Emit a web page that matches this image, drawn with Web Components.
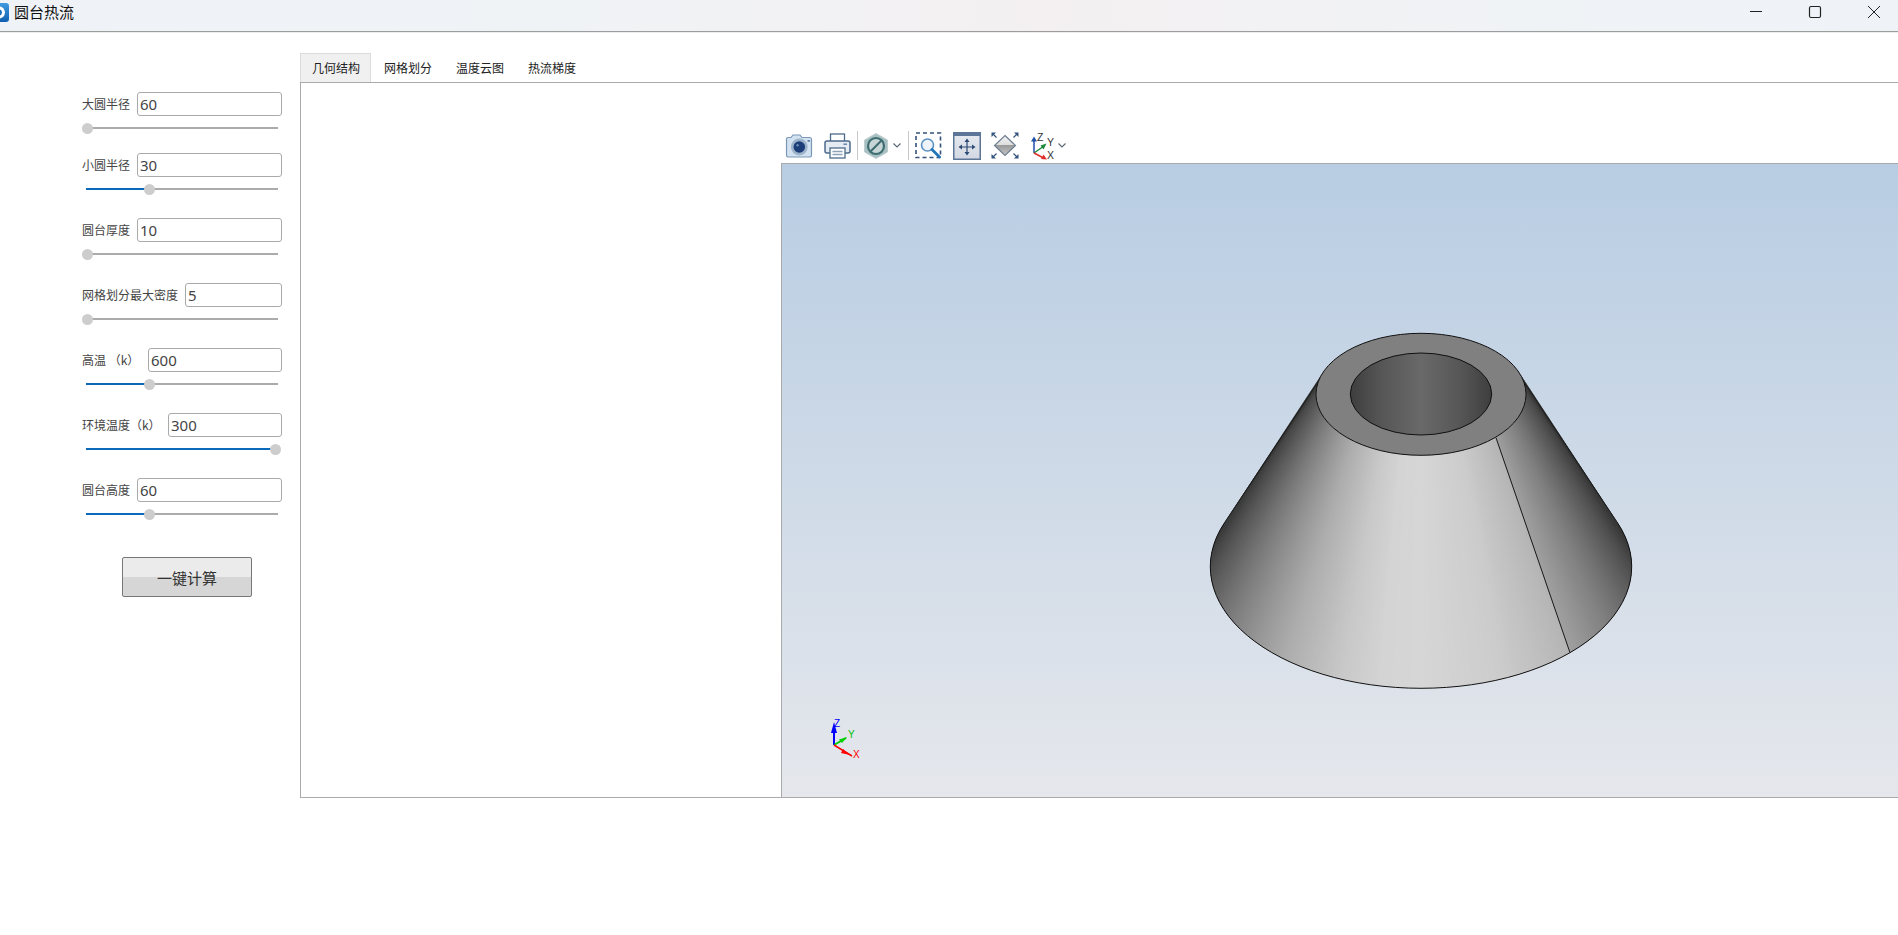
<!DOCTYPE html>
<html lang="zh-CN">
<head>
<meta charset="utf-8">
<title>圆台热流</title>
<style>
  html, body { margin: 0; height: 100%; overflow: hidden; background: #fff; }
  body { font-family: "Noto Sans CJK SC", "Noto Sans", sans-serif; }
  param-row.first { margin-bottom: -4px; }
</style>
</head>
<body>
<app-shell>
  <title-bar slot="top" caption="圆台热流"></title-bar>
  <side-panel slot="side">
    <param-row class="first" value="60" percent="0" label-width="48">大圆半径</param-row>
    <param-row value="30" percent="33" label-width="48">小圆半径</param-row>
    <param-row value="10" percent="0" label-width="48">圆台厚度</param-row>
    <param-row value="5" percent="0" label-width="96">网格划分最大密度</param-row>
    <param-row value="600" percent="33" label-width="59">高温 （k）</param-row>
    <param-row value="300" percent="100" label-width="79">环境温度（k）</param-row>
    <param-row value="60" percent="33" label-width="48">圆台高度</param-row>
    <calc-button>一键计算</calc-button>
  </side-panel>
  <tab-panel slot="main" tabs="几何结构,网格划分,温度云图,热流梯度">
    <cad-toolbar></cad-toolbar>
    <cad-viewport></cad-viewport>
  </tab-panel>
</app-shell>

<script>
/**
 * Page frame: title bar on top, parameters on the left, tabs on the right
 */
class AppShell extends HTMLElement {
  constructor() {
    super();
    this.attachShadow({ mode: 'open' });
    this.shadowRoot.innerHTML = `
      <style>
        :host { display: flex; flex-direction: column; height: 935px; overflow: hidden; }
        .body { display: flex; flex: 1; min-height: 0; }
      </style>
      <slot name="top"></slot>
      <div class="body">
        <slot name="side"></slot>
        <slot name="main"></slot>
      </div>
    `;
  }
}

class TitleBar extends HTMLElement {
  constructor() {
    super();
    this.attachShadow({ mode: 'open' });
  }

  connectedCallback() {
    this.shadowRoot.innerHTML = `
      <style>
        :host {
          display: flex;
          align-items: flex-start;
          flex: none;
          height: 31px;
          background: linear-gradient(90deg, #eff3f7 0%, #f0f3f6 30%, #f4f0f1 55%, #f0f3f6 80%, #eff3f7 100%);
          border-bottom: 1px solid #9c9c9c;
          box-shadow: 0 1px 0 #eeeeee;
        }
        .logo { width: 19px; height: 19px; margin: 3px 5px 0 -10px; flex: none; }
        .caption { font: 15px/24px "Noto Sans CJK SC", sans-serif; color: #111; flex: 1; }
        svg.win { display: block; flex: none; margin-top: 5px; }
      </style>
      <svg class="logo" viewBox="0 0 19 19">
        <defs><linearGradient id="lg" x1="0" y1="0" x2="0" y2="1">
          <stop offset="0" stop-color="#3f9be0"/><stop offset="1" stop-color="#0f5fb0"/>
        </linearGradient></defs>
        <rect width="19" height="19" rx="3" fill="url(#lg)"/>
        <circle cx="9" cy="9.5" r="6" fill="#fff"/>
        <circle cx="9" cy="9.5" r="3" fill="#1a70c0"/>
      </svg>
      <div class="caption">${this.getAttribute('caption')}</div>
      <svg class="win" width="14" height="14" viewBox="0 0 14 14" style="margin-right:45px">
        <path d="M1 6.5H13" stroke="#222" stroke-width="1" fill="none"/>
      </svg>
      <svg class="win" width="14" height="14" viewBox="0 0 14 14" style="margin-right:45px">
        <rect x="1.5" y="1.5" width="11" height="11" rx="1.5" stroke="#222" stroke-width="1.2" fill="none"/>
      </svg>
      <svg class="win" width="14" height="14" viewBox="0 0 14 14" style="margin-right:17px">
        <path d="M1 1L13 13M13 1L1 13" stroke="#222" stroke-width="1" fill="none"/>
      </svg>
    `;
  }
}

class SidePanel extends HTMLElement {
  constructor() {
    super();
    this.attachShadow({ mode: 'open' });
    this.shadowRoot.innerHTML = `
      <style>
        :host {
          display: flex;
          flex-direction: column;
          gap: 28px;
          flex: none;
          box-sizing: border-box;
          width: 300px;
          padding: 60px 18px 0 82px;
        }
      </style>
      <slot></slot>
    `;
  }
}

class ParamRow extends HTMLElement {
  constructor() {
    super();
    this.attachShadow({ mode: 'open' });
  }

  get percent() {
    return parseFloat(this.getAttribute('percent')) || 0;
  }

  connectedCallback() {
    this.shadowRoot.innerHTML = `
      <style>
        :host { display: block; width: 200px; }
        .line { display: flex; align-items: center; gap: 7px; height: 24px; }
        .label {
          flex: none;
          width: ${this.getAttribute('label-width')}px;
          white-space: nowrap;
          font: 12px/24px "Noto Sans CJK SC", sans-serif;
          color: #444;
        }
        .field {
          flex: 1;
          box-sizing: border-box;
          height: 24px;
          padding-left: 2px;
          border: 1px solid #aaa;
          border-radius: 3px;
          background: #fff;
          font: 15px/22px "Noto Sans", sans-serif;
          color: #444;
        }
        .track { position: relative; height: 2px; margin: 11px 4px 0; background: #ababab; }
        .fill { height: 2px; background: #0b69bb; width: ${this.percent}%; }
        .thumb {
          position: absolute;
          top: -4.5px;
          left: calc(1px + (100% - 4px) * ${this.percent / 100});
          width: 11px;
          height: 11px;
          margin-left: -5px;
          border-radius: 50%;
          background: #cdcdcd;
        }
      </style>
      <div class="line">
        <div class="label"><slot></slot></div>
        <div class="field">${this.getAttribute('value')}</div>
      </div>
      <div class="track"><div class="fill"></div><div class="thumb"></div></div>
    `;
  }
}

class CalcButton extends HTMLElement {
  constructor() {
    super();
    this.attachShadow({ mode: 'open' });
    this.shadowRoot.innerHTML = `
      <style>
        :host {
          display: flex;
          align-items: center;
          justify-content: center;
          box-sizing: border-box;
          width: 130px;
          height: 40px;
          margin: 14px 0 0 40px;
          border: 1px solid #777;
          border-radius: 2px;
          background: linear-gradient(180deg, #ebebeb 0, #ebebeb 50%, #d6d6d6 50%, #d6d6d6 100%);
          font: 15px "Noto Sans CJK SC", sans-serif;
          color: #333;
        }
      </style>
      <slot></slot>
    `;
  }
}

class TabPanel extends HTMLElement {
  constructor() {
    super();
    this.attachShadow({ mode: 'open' });
  }

  connectedCallback() {
    const tabs = this.getAttribute('tabs').split(',');
    this.shadowRoot.innerHTML = `
      <style>
        :host {
          display: flex;
          flex-direction: column;
          flex: 1;
          min-width: 0;
          height: 745px;
          margin-top: 21px;
        }
        .tabs { display: flex; flex: none; height: 29px; }
        .tab {
          box-sizing: border-box;
          width: 72px;
          padding-left: 12px;
          font: 12px/29px "Noto Sans CJK SC", sans-serif;
          color: #222;
        }
        .tab.active {
          width: 71px;
          margin-right: 1px;
          padding-left: 11px;
          line-height: 27px;
          background: #f0f0f0;
          border: 1px solid #dcdcdc;
          border-bottom: 0;
        }
        .pane {
          flex: 1;
          display: flex;
          min-height: 0;
          border: 1px solid #aaa;
          border-right: 0;
          background: #fff;
        }
        .blank { flex: none; width: 480px; }
        .content { flex: 1; min-width: 0; display: flex; flex-direction: column; padding-top: 48px; }
      </style>
      <div class="tabs">
        ${tabs.map((t, i) => `<div class="tab ${i === 0 ? 'active' : ''}">${t}</div>`).join('')}
      </div>
      <div class="pane">
        <div class="blank"></div>
        <div class="content"><slot></slot></div>
      </div>
    `;
  }
}

// toolbar icons, drawn on their own little grids
const CHEVRON = `<svg width="8" height="5" viewBox="0 0 8 5"><path d="M.5 .5L4 4L7.5 .5" fill="none" stroke="#5d6b78" stroke-width="1.2"/></svg>`;

class CadToolbar extends HTMLElement {
  constructor() {
    super();
    this.attachShadow({ mode: 'open' });
    this.shadowRoot.innerHTML = `
      <style>
        :host {
          display: flex;
          align-items: center;
          flex: none;
          height: 32px;
          box-sizing: border-box;
          padding: 0 0 3px 4px;
        }
        svg { display: block; flex: none; }
        .sep { flex: none; width: 1px; height: 29px; background: #c9c9c9; }
      </style>
      <svg width="28" height="24" viewBox="0 0 28 24" style="margin-right:11px">
        <path d="M1.5 5.5 Q1.5 3.5 3 3.5 H6 L8 1 H15 L17 3.5 H25 Q26.5 3.5 26.5 5.5 V21 Q26.5 23 25 23 H3 Q1.5 23 1.5 21 Z" fill="#d3e2f0" stroke="#7b97b8" stroke-width="1.2"/>
        <circle cx="14.3" cy="13" r="8.4" fill="#9db3ca"/>
        <circle cx="14.3" cy="13" r="5.8" fill="#1c3d78"/>
        <circle cx="12.6" cy="11.2" r="1.2" fill="#6a8dbb"/>
        <rect x="22.5" y="6" width="2.4" height="1.8" fill="#5d7ea6"/>
      </svg>
      <svg width="27" height="26" viewBox="0 0 27 26" style="margin-right:6px">
        <rect x="6.5" y="1" width="14" height="8" fill="#fff" stroke="#4c6b8c" stroke-width="1.3"/>
        <rect x="1" y="8" width="25" height="12" rx="2" fill="#e4ebf2" stroke="#4c6b8c" stroke-width="1.5"/>
        <rect x="19.5" y="10.5" width="3.5" height="1.4" fill="#5d7ea6"/>
        <rect x="6" y="15" width="15" height="10" fill="#fff" stroke="#4c6b8c" stroke-width="1.3"/>
        <path d="M8.5 18.5H18.5M8.5 21.5H18.5" stroke="#8ba2b9" stroke-width="1.4"/>
      </svg>
      <div class="sep" style="margin-right:6px"></div>
      <svg width="24" height="26" viewBox="0 0 24 26" style="margin-right:5px">
        <path d="M12 .5L23.5 7V19L12 25.5L.5 19V7Z" fill="#a9c0c2" stroke="#bccecf"/>
        <circle cx="12" cy="13" r="8" fill="#c8d5d6" stroke="#3f6e72" stroke-width="2.2"/>
        <path d="M6.5 18.5L17.5 7.5" stroke="#3f6e72" stroke-width="2.2"/>
      </svg>
      ${CHEVRON}
      <div class="sep" style="margin:0 6px 0 7px"></div>
      <svg width="27" height="27" viewBox="0 0 27 27" style="margin-right:11px">
        <rect x="1" y="1" width="24.5" height="24.5" fill="none" stroke="#34527c" stroke-width="1.6" stroke-dasharray="4 3"/>
        <circle cx="12.5" cy="13" r="6" fill="#eef4f9" stroke="#5c93c4" stroke-width="1.6"/>
        <path d="M17 17.5L24.5 25" stroke="#1f74ba" stroke-width="2.8" stroke-linecap="round"/>
      </svg>
      <svg width="28" height="28" viewBox="0 0 28 28" style="margin-right:10px">
        <defs><linearGradient id="fit" x1="0" y1="0" x2="0" y2="1">
          <stop offset="0" stop-color="#e6e9f0"/><stop offset="1" stop-color="#d2d8e2"/>
        </linearGradient></defs>
        <rect x=".75" y=".75" width="26.5" height="26.5" fill="url(#fit)" stroke="#5d7596" stroke-width="1.5"/>
        <rect x="1" y="1" width="26" height="3" fill="#5d7596"/>
        <path d="M14 8V22M7 15H21" stroke="#2c4a74" stroke-width="1.2"/>
        <path d="M14 6.5L11.5 10H16.5ZM14 23.5L11.5 20H16.5ZM5.5 15L9 12.5V17.5ZM22.5 15L19 12.5V17.5Z" fill="#2c4a74"/>
      </svg>
      <svg width="28" height="27" viewBox="0 0 28 27" style="margin-right:11px">
        <defs><linearGradient id="dia" x1="0" y1="0" x2="0" y2="1">
          <stop offset="0" stop-color="#f2f2f2"/><stop offset=".5" stop-color="#dcdcdc"/>
          <stop offset=".5" stop-color="#9a9a9a"/><stop offset="1" stop-color="#c8c8c8"/>
        </linearGradient></defs>
        <path d="M14 3.5L24.5 13.5L14 23.5L3.5 13.5Z" fill="url(#dia)" stroke="#6e7f92" stroke-width="1.2"/>
        <path d="M.5 .5H5L.5 5ZM27.5 .5H23L27.5 5ZM.5 26.5H5L.5 22ZM27.5 26.5H23L27.5 22Z" fill="#33557f"/>
        <path d="M2 2L5.5 5.5M26 2L22.5 5.5M2 25L5.5 21.5M26 25L22.5 21.5" stroke="#33557f" stroke-width="1.2"/>
      </svg>
      <svg width="26" height="28" viewBox="0 0 26 28" style="margin-right:2px">
        <path d="M4 21V7" stroke="#1f4fa8" stroke-width="1.5"/>
        <path d="M4 4.5L1 9.5H7Z" fill="#1f4fa8"/>
        <path d="M4 21L14 14" stroke="#1c8a3c" stroke-width="1.5"/>
        <path d="M16.5 11.5L10.5 13.5L13.5 17.5Z" fill="#1c8a3c"/>
        <path d="M4 21L14.5 26.5" stroke="#e0302c" stroke-width="1.5"/>
        <path d="M17 27.5L13.5 22.5L11 27Z" fill="#e0302c"/>
        <text x="7" y="9" font-family="Liberation Sans, sans-serif" font-size="10.5" fill="#333">Z</text>
        <text x="17" y="14" font-family="Liberation Sans, sans-serif" font-size="10.5" fill="#333">Y</text>
        <text x="17" y="27" font-family="Liberation Sans, sans-serif" font-size="10.5" fill="#333">X</text>
      </svg>
      ${CHEVRON}
    `;
  }
}

/**
 * 3D view: the truncated cone is shaded facet by facet, the way the kernel view draws it
 */
class CadViewport extends HTMLElement {
  constructor() {
    super();
    this.attachShadow({ mode: 'open' });
  }

  connectedCallback() {
    this.render();
  }

  // grey level for an angle around the cone, t = 0 front, +1 left edge, -1 right edge
  // the seam at 45deg (t = -0.405) has a jump in brightness
  shade(t) {
    const left = [[0, 214], [0.1, 212], [0.2, 200], [0.355, 174], [0.5, 142], [0.69, 100], [1, 40]];
    const right = [[0, 214], [0.2, 204], [0.405, 180]];
    const past = [[0.405, 160], [0.7, 96], [1, 36]];
    const a = Math.abs(t);
    const table = t >= 0 ? left : (a <= 0.405 ? right : past);
    for (let i = 1; i < table.length; i++) {
      if (a <= table[i][0]) {
        const k = (a - table[i - 1][0]) / (table[i][0] - table[i - 1][0]);
        return Math.round(table[i - 1][1] + k * (table[i][1] - table[i - 1][1]));
      }
    }
    return table[table.length - 1][1];
  }

  renderFacets() {
    const cx = 1421;
    const top = { rx: 105, ry: 61, cy: 394.3 };
    const base = { rx: 210.7, ry: 121.6, cy: 566.7 };
    const rad = Math.PI / 180;
    let out = '';
    // each facet runs over the next one, the next paints on top, so no gaps show
    for (let d = -21; d < 201; d++) {
      const a = d * rad;
      const b = Math.min(d + 2, 201) * rad;
      const g = this.shade((d + 0.5 - 90) / 111);
      const pts = [
        [cx + top.rx * Math.cos(a), top.cy + top.ry * Math.sin(a)],
        [cx + base.rx * Math.cos(a), base.cy + base.ry * Math.sin(a)],
        [cx + base.rx * Math.cos(b), base.cy + base.ry * Math.sin(b)],
        [cx + top.rx * Math.cos(b), top.cy + top.ry * Math.sin(b)]
      ].map(p => p[0].toFixed(1) + ',' + p[1].toFixed(1)).join(' ');
      out += `<polygon points="${pts}" fill="rgb(${g},${g},${g})"/>`;
    }
    return out;
  }

  render() {
    this.shadowRoot.innerHTML = `
      <style>
        :host {
          display: block;
          flex: 1;
          min-height: 0;
          overflow: hidden;
          border-top: 1px solid #aaa;
          border-left: 1px solid #aaa;
          background: linear-gradient(180deg, #b8cde3 0%, #e5e7ec 100%);
        }
        svg { display: block; }
        text { font-family: "Liberation Sans", sans-serif; font-size: 10px; }
      </style>
      <svg width="1116" height="633" viewBox="782 164 1116 633">
        <defs>
          <linearGradient id="hole" x1="0" y1="0" x2="1" y2="0">
            <stop offset="0" stop-color="#3e3e3e"/>
            <stop offset=".22" stop-color="#565656"/>
            <stop offset=".5" stop-color="#696969"/>
            <stop offset=".78" stop-color="#565656"/>
            <stop offset="1" stop-color="#3e3e3e"/>
          </linearGradient>
        </defs>
        <polygon points="1318,382 1224.3,523.1 1330,372" fill="#333"/>
        <polygon points="1524,382 1617.7,523.1 1512,372" fill="#333"/>
        ${this.renderFacets()}
        <path d="M1318 382L1224.3 523.1M1524 382L1617.7 523.1" stroke="#1c1c1c" stroke-width="1" fill="none"/>
        <path d="M1224.3 523.1 A210.7 121.6 0 1 0 1617.7 523.1" stroke="#111" stroke-width="1" fill="none"/>
        <path d="M1496 437.7L1570 652.7" stroke="#1a1a1a" stroke-width="1"/>
        <ellipse cx="1421" cy="394.3" rx="105" ry="61" fill="#808080" stroke="#111" stroke-width="1"/>
        <ellipse cx="1421" cy="394" rx="70.7" ry="41" fill="url(#hole)" stroke="#111" stroke-width="1"/>

        <path d="M834 745V726" stroke="#0000ff" stroke-width="2"/>
        <path d="M834 722L831 733H837Z" fill="#0000ff"/>
        <path d="M834 745L846 738" stroke="#00d000" stroke-width="2"/>
        <path d="M847 737L839 739.5L842 743Z" fill="#00d000"/>
        <path d="M834 745L852 756" stroke="#ff0000" stroke-width="1.5"/>
        <path d="M850 755L843 749L841 753Z" fill="#ff0000"/>
        <text x="834" y="727" fill="#0000ff" font-size="10">Z</text>
        <text x="848" y="738" fill="#00c000">Y</text>
        <text x="853" y="758" fill="#ff0000">X</text>
      </svg>
    `;
  }
}

customElements.define('app-shell', AppShell);
customElements.define('title-bar', TitleBar);
customElements.define('side-panel', SidePanel);
customElements.define('param-row', ParamRow);
customElements.define('calc-button', CalcButton);
customElements.define('tab-panel', TabPanel);
customElements.define('cad-toolbar', CadToolbar);
customElements.define('cad-viewport', CadViewport);
</script>
</body>
</html>
